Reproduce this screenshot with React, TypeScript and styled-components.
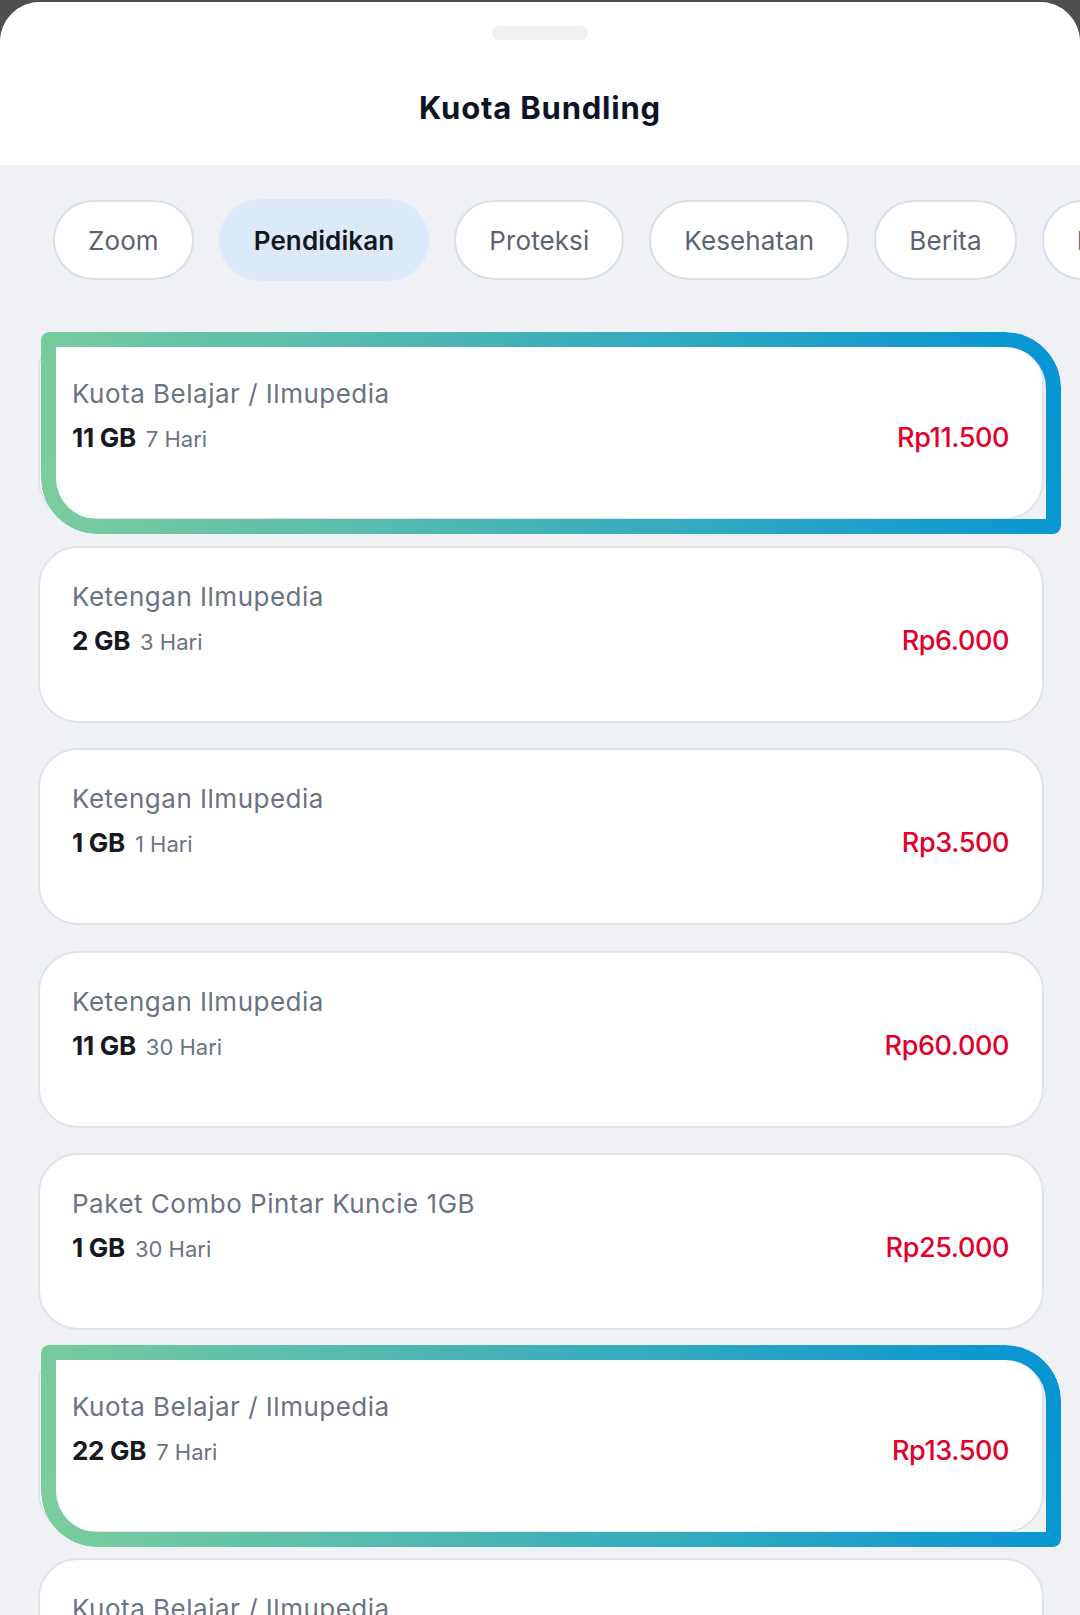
import { FunctionComponent } from "react";
import styled, { createGlobalStyle } from "styled-components";

const GlobalStyle = createGlobalStyle`
  html, body {
    margin: 0;
    padding: 0;
    background: #4f4f4f;
  }
  * {
    box-sizing: border-box;
  }
`;

// Sheet
const Sheet = styled.div`
  margin-top: 2px;
  min-height: 1613px;
  background-color: #eff1f5;
  border-radius: 40px 40px 0 0;
  overflow: hidden;
  font-family: "Inter", "Noto Sans", sans-serif;
`;

const Header = styled.header`
  height: 163px;
  background-color: #fff;
  display: flex;
  flex-direction: column;
  align-items: center;
  padding-top: 24px;
`;

const Handle = styled.div`
  width: 96px;
  height: 14px;
  border-radius: 7px;
  background-color: #eef0f4;
`;

const Title = styled.h1`
  margin: 50px 0 0;
  font-size: 31px;
  line-height: 36px;
  font-weight: 700;
  color: #0b1526;
  letter-spacing: 0.8px;
`;

// Category chips
const ChipRow = styled.div`
  display: flex;
  gap: 25px;
  padding: 35px 0 0 53px;
  white-space: nowrap;
`;

const Chip = styled.div<{ $active?: boolean }>`
  flex: none;
  height: ${(p) => (p.$active ? "82px" : "80px")};
  margin-top: ${(p) => (p.$active ? "-1px" : "0")};
  padding: 0 33px;
  display: flex;
  align-items: center;
  border-radius: 41px;
  border: 2px solid ${(p) => (p.$active ? "#dce9f9" : "#d9dfe8")};
  background-color: ${(p) => (p.$active ? "#dce9f9" : "#fff")};
  color: ${(p) => (p.$active ? "#14171c" : "#5b6370")};
  font-size: 26px;
  letter-spacing: 0.1px;
  font-weight: ${(p) => (p.$active ? 600 : 400)};
`;

// Package list
const List = styled.div`
  display: flex;
  flex-direction: column;
  gap: 25.5px;
  padding: 62px 36px 0 38px;
`;

const Card = styled.div<{ $highlight?: boolean }>`
  position: relative;
  height: 177px;
  flex: none;
  background-color: #fff;
  border: 2px solid #dfe4ec;
  border-radius: ${(p) => (p.$highlight ? "24px 40px 40px 40px" : "40px")};
  padding: 33px 33px 0 32px;
`;

const Frame = styled.div`
  position: absolute;
  left: 1px;
  top: -13px;
  right: -19px;
  bottom: -16px;
  padding: 15px;
  border-radius: 8px 56px 8px 56px;
  background: linear-gradient(80deg, #7ccd9d 0%, #0594d4 100%);
  -webkit-mask: linear-gradient(#000 0 0) content-box, linear-gradient(#000 0 0);
  -webkit-mask-composite: xor;
  mask-composite: exclude;
  pointer-events: none;
`;

const Name = styled.div`
  font-size: 26px;
  line-height: 31px;
  letter-spacing: 0.5px;
  color: #6b7382;
`;

const InfoRow = styled.div`
  margin-top: 12px;
  display: flex;
  align-items: baseline;
  justify-content: space-between;
  line-height: 34px;
`;

const Quota = styled.div`
  display: flex;
  align-items: baseline;
  gap: 10px;
`;

const Size = styled.span`
  font-size: 26px;
  font-weight: 700;
  color: #16191f;
  letter-spacing: -0.3px;
`;

const Days = styled.span`
  font-size: 22px;
  color: #6b7382;
`;

const Price = styled.span`
  font-size: 27px;
  font-weight: 500;
  color: #e1002b;
  letter-spacing: -0.4px;
`;

const chips = ["Zoom", "Pendidikan", "Proteksi", "Kesehatan", "Berita", "Hiburan"];

const packages = [
  { name: "Kuota Belajar / Ilmupedia", size: "11 GB", days: "7 Hari", price: "Rp11.500", highlight: true },
  { name: "Ketengan Ilmupedia", size: "2 GB", days: "3 Hari", price: "Rp6.000" },
  { name: "Ketengan Ilmupedia", size: "1 GB", days: "1 Hari", price: "Rp3.500" },
  { name: "Ketengan Ilmupedia", size: "11 GB", days: "30 Hari", price: "Rp60.000" },
  { name: "Paket Combo Pintar Kuncie 1GB", size: "1 GB", days: "30 Hari", price: "Rp25.000" },
  { name: "Kuota Belajar / Ilmupedia", size: "22 GB", days: "7 Hari", price: "Rp13.500", highlight: true },
  { name: "Kuota Belajar / Ilmupedia", size: "33 GB", days: "7 Hari", price: "Rp15.500" },
];

const App: FunctionComponent = () => {
  return (
    <>
      <GlobalStyle />
      <Sheet>
        <Header>
          <Handle />
          <Title>Kuota Bundling</Title>
        </Header>

        <ChipRow>
          {chips.map((c) => (
            <Chip key={c} $active={c === "Pendidikan"}>
              {c}
            </Chip>
          ))}
        </ChipRow>

        <List>
          {packages.map((p, i) => (
            <Card key={i} $highlight={p.highlight}>
              <Name>{p.name}</Name>
              <InfoRow>
                <Quota>
                  <Size>{p.size}</Size>
                  <Days>{p.days}</Days>
                </Quota>
                <Price>{p.price}</Price>
              </InfoRow>
              {p.highlight && <Frame />}
            </Card>
          ))}
        </List>
      </Sheet>
    </>
  );
};

export default App;
